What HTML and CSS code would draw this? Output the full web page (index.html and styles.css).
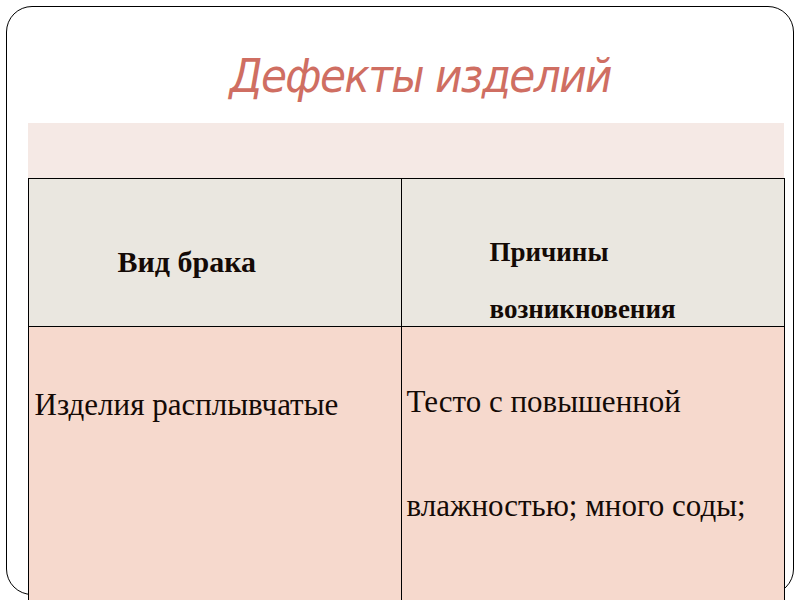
FILE: index.html
```html
<!DOCTYPE html>
<html lang="ru">
<head>
<meta charset="utf-8">
<title>Дефекты изделий</title>
<link rel="stylesheet" href="styles.css">
</head>
<body>
<div class="frame">
  <h1 class="title">Дефекты изделий</h1>
  <div class="band"></div>
  <div class="table">
    <div class="cell head head-left">
      <p class="hline hline-big">Вид брака</p>
    </div>
    <div class="cell head head-right">
      <p class="hline">Причины</p>
      <p class="hline hline-2">возникновения</p>
    </div>
    <div class="cell body body-left">
      <p class="bline">Изделия расплывчатые</p>
    </div>
    <div class="cell body body-right">
      <p class="bline">Тесто с повышенной</p>
      <p class="bline bline-2">влажностью; много соды;</p>
    </div>
  </div>
</div>
</body>
</html>
```
FILE: styles.css
```css
html, body {
  margin: 0;
  padding: 0;
  width: 800px;
  height: 600px;
  overflow: hidden;
  background: #ffffff;
}

.frame {
  box-sizing: border-box;
  margin: 6px 0 0 6px;
  width: 788px;
  height: 589px;
  border: 1.5px solid #000000;
  border-radius: 26px;
  padding: 0 0 0 20.5px;
}

.title {
  margin: 41px 0 0 0;
  padding-left: 202px;
  height: 56px;
  font-family: "DejaVu Sans", sans-serif;
  font-stretch: condensed;
  font-style: italic;
  font-weight: normal;
  font-size: 47px;
  line-height: 56px;
  letter-spacing: -1.6px;
  color: #cf6e62;
  white-space: nowrap;
}

.band {
  margin-top: 19px;
  width: 756px;
  height: 55px;
  background: #f5e9e5;
}

.table {
  display: grid;
  grid-template-columns: 373px 383px;
  grid-template-rows: 148px 290px;
  border-top: 1px solid #000000;
  border-left: 1px solid #000000;
  width: 756px;
  font-family: "Liberation Serif", "Times New Roman", serif;
  color: #140a06;
}

.cell {
  box-sizing: border-box;
  border-right: 1px solid #000000;
}

.head {
  background: #eae7e0;
  border-bottom: 1px solid #000000;
}

.body {
  background: #f6d9cd;
}

.head-left {
  padding: 67px 0 0 89px;
}

.head-right {
  padding: 57px 0 0 88px;
}

.hline {
  margin: 0;
  font-weight: bold;
  font-size: 27px;
  line-height: 32px;
  white-space: nowrap;
}

.hline-big {
  font-size: 30px;
}

.hline-2 {
  margin-top: 25px;
}

.body-left {
  padding: 60px 0 0 6px;
}

.body-right {
  padding: 57px 0 0 5px;
}

.bline {
  margin: 0;
  font-size: 31px;
  line-height: 36px;
  white-space: nowrap;
}

.bline-2 {
  margin-top: 68px;
}
```
